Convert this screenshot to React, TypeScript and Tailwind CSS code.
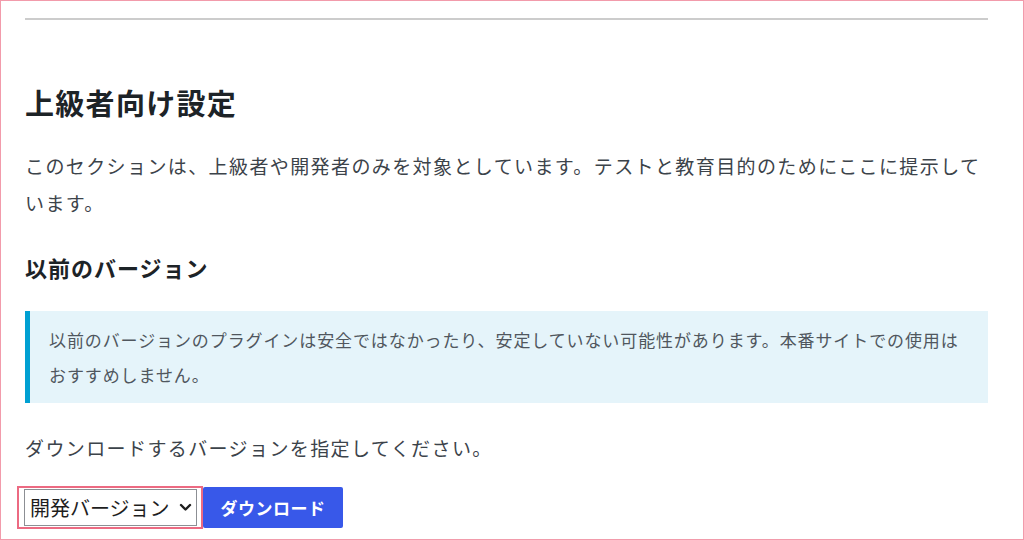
const font = "font-['Noto_Sans_CJK_JP',sans-serif]";

const Chevron = () => (
  <svg width="13" height="9" viewBox="0 0 13 9" className="shrink-0">
    <path d="M2 2 L6.5 6.5 L11 2" fill="none" stroke="#1e1e1e" strokeWidth="2.4" strokeLinecap="round" strokeLinejoin="round" />
  </svg>
);

const VersionSelect = () => (
  <div className="flex h-[43px] w-[186px] border-2 border-[#ec6a82] pl-[5px] pr-[4px] pt-[1px] pb-[1px]">
    <div className="flex flex-1 items-center justify-between border border-[#8c8f94] bg-white pl-[5px] pr-[4px]">
      <span className="text-[20px] leading-[24px] text-[#1e1e1e]">開発バージョン</span>
      <Chevron />
    </div>
  </div>
);

export default function App() {
  return (
    <div className={`${font} box-border h-[540px] w-[1024px] overflow-hidden border border-[#f29bab] bg-white`}>
      <div className="pl-[24px] pr-[35px] pt-[17px]">
        <hr className="h-[2px] border-0 bg-[#cccccc]" />

        <h2 className="mt-[64px] text-[29px] leading-[36px] font-bold tracking-[1.3px] text-[#1d2327]">
          上級者向け設定
        </h2>

        <p className="mt-[27px] text-[19px] leading-[37px] tracking-[1.4px] text-[#3c434a]">
          このセクションは、上級者や開発者のみを対象としています。テストと教育目的のためにここに提示しています。
        </p>

        <h3 className="mt-[31px] text-[22px] leading-[30px] font-bold tracking-[1px] text-[#1d2327]">
          以前のバージョン
        </h3>

        <div className="mt-[29px] border-l-[5px] border-[#00a0d2] bg-[#e5f4fa] py-[11px] pl-[19px] pr-[19px]">
          <p className="text-[17px] leading-[35px] tracking-[0.9px] text-[#50575e]">
            以前のバージョンのプラグインは安全ではなかったり、安定していない可能性があります。本番サイトでの使用はおすすめしません。
          </p>
        </div>

        <p className="mt-[26px] text-[19px] leading-[37px] tracking-[1.4px] text-[#3c434a]">
          ダウンロードするバージョンを指定してください。
        </p>

        <div className="mt-[20px] -ml-[8px] flex items-start">
          <VersionSelect />
          <button className="mt-[1px] h-[41px] w-[140px] rounded-[2px] bg-[#3858e9] text-[17px] font-bold tracking-[0.5px] text-white">
            ダウンロード
          </button>
        </div>
      </div>
    </div>
  );
}
